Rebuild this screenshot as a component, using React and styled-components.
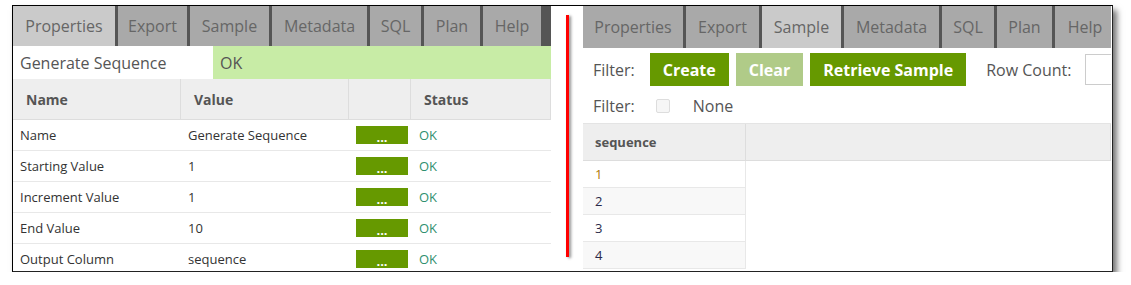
import React from 'react'
import styled, { createGlobalStyle } from 'styled-components'

const Global = createGlobalStyle`
  body {
    margin: 0;
    background: #fff;
    font-family: "Open Sans", "Liberation Sans", sans-serif;
  }
`

const Page = styled.div`
  padding: 5px 0 0 12px;
`

const Frame = styled.div`
  width: 1099px;
  height: 265px;
  display: flex;
  background: #fff;
  border-left: 1px solid #000;
  border-top: 1px solid #000;
  border-right: 1px solid #222;
  border-bottom: 1px solid #222;
  box-shadow: 4px 5px 6px rgba(0, 0, 0, 0.55);
  overflow: hidden;
`

const Panel = styled.div`
  width: ${p => p.w}px;
  display: flex;
  flex-direction: column;
  flex-shrink: 0;
  overflow: hidden;
  & > * { flex-shrink: 0; }
`

const Tabs = styled.div`
  display: flex;
  height: ${p => p.h}px;
  background: #555;
`

const Tab = styled.div`
  width: ${p => p.w}px;
  flex-shrink: 0;
  margin-right: 3px;
  display: flex;
  align-items: center;
  justify-content: center;
  font-size: 16px;
  color: #666;
  white-space: nowrap;
  background: ${p => (p.active ? '#cacaca' : '#a9a9a9')};
  &:last-child { margin-right: 0; }
`

const Gutter = styled.div`
  width: 32px;
  flex-shrink: 0;
  display: flex;
  justify-content: center;
  padding-top: 9px;
`

const RedLine = styled.div`
  width: 3px;
  height: 242px;
  background: #f00;
  box-shadow: 2px 1px 3px rgba(0, 0, 0, 0.45);
`

const StatusRow = styled.div`
  display: flex;
  height: 33px;
  font-size: 16px;
  color: #555;
`

const StatusName = styled.div`
  width: 200px;
  box-sizing: border-box;
  padding-left: 7px;
  display: flex;
  align-items: center;
`

const StatusOk = styled.div`
  flex: 1;
  background: #c8eca6;
  padding-left: 7px;
  display: flex;
  align-items: center;
`

const Grid = styled.div`
  display: grid;
  grid-template-columns: ${p => p.cols};
`

const Head = styled.div`
  height: ${p => p.h}px;
  box-sizing: border-box;
  background: #eee;
  border-right: 1px solid #ddd;
  border-bottom: 1px solid #ddd;
  display: flex;
  align-items: center;
  padding-left: ${p => p.pl || 13}px;
  font-size: ${p => p.fs || 14}px;
  font-weight: 700;
  color: #555;
  &:last-child { border-right: none; }
`

const Cell = styled.div`
  height: ${p => p.h}px;
  box-sizing: border-box;
  display: flex;
  align-items: center;
  padding-left: ${p => p.pl || 7}px;
  font-size: 13px;
  white-space: nowrap;
  color: ${p => p.color || '#333'};
  background: ${p => p.bg || '#fff'};
  border-bottom: ${p => (p.nb ? 'none' : '1px solid #e8e8e8')};
  border-right: ${p => (p.br ? '1px solid #e8e8e8' : 'none')};
`

const DotButton = styled.div`
  width: 52px;
  height: 18px;
  background: #669900;
  color: #fff;
  font-weight: 700;
  font-size: 13px;
  display: flex;
  align-items: flex-end;
  justify-content: center;
  line-height: 14px;
`

const Toolbar = styled.div`
  display: flex;
  align-items: center;
  gap: ${p => p.gap || 0}px;
  padding: ${p => p.pad};
  font-size: 16px;
  color: #555;
  white-space: nowrap;
  & > * { flex-shrink: 0; }
`

const Label = styled.span`
  margin-right: ${p => p.mr || 0}px;
  margin-left: ${p => p.ml || 0}px;
`

const Button = styled.div`
  height: 33px;
  padding: 0 13px;
  display: flex;
  align-items: center;
  background: ${p => (p.light ? '#b0cb88' : '#669900')};
  color: #fff;
  font-weight: 700;
  font-size: 16px;
`

const Input = styled.div`
  width: 40px;
  height: 29px;
  border: 1px solid #ccc;
  margin-left: 7px;
`

const Check = styled.div`
  width: 12px;
  height: 12px;
  border: 1px solid #ddd;
  border-radius: 2px;
  background: #f6f6f6;
  margin: 0 23px 0 0;
`

const Sample = styled.div`
  margin-top: 6px;
  display: grid;
  grid-template-columns: 163px 1fr;
  border-top: 1px solid #e4e4e4;
`

const leftRows = [
  ['Name', 'Generate Sequence'],
  ['Starting Value', '1'],
  ['Increment Value', '1'],
  ['End Value', '10'],
  ['Output Column', 'sequence'],
]

const leftTabs = [
  ['Properties', 102, true],
  ['Export', 69],
  ['Sample', 79],
  ['Metadata', 95],
  ['SQL', 51],
  ['Plan', 56],
  ['Help', 58],
]

const rightTabs = [
  ['Properties', 100],
  ['Export', 73],
  ['Sample', 79, true],
  ['Metadata', 95],
  ['SQL', 52],
  ['Plan', 55],
  ['Help', 60],
]

export default function App() {
  return (
    <Page>
      <Global />
      <Frame>
        <Panel w={538}>
          <Tabs h={40}>
            {leftTabs.map(([t, w, a]) => (
              <Tab key={t} w={w} active={a}>{t}</Tab>
            ))}
          </Tabs>
          <StatusRow>
            <StatusName>Generate Sequence</StatusName>
            <StatusOk>OK</StatusOk>
          </StatusRow>
          <Grid cols="168px 168px 62px 1fr">
            <Head h={41}>Name</Head>
            <Head h={41}>Value</Head>
            <Head h={41} />
            <Head h={41}>Status</Head>
            {leftRows.map(([n, v]) => (
              <React.Fragment key={n}>
                <Cell h={31}>{n}</Cell>
                <Cell h={31}>{v}</Cell>
                <Cell h={31}><DotButton>...</DotButton></Cell>
                <Cell h={31} pl={8} color="#2f8f6f">OK</Cell>
              </React.Fragment>
            ))}
          </Grid>
        </Panel>
        <Gutter>
          <RedLine />
        </Gutter>
        <Panel w={528}>
          <Tabs h={42}>
            {rightTabs.map(([t, w, a]) => (
              <Tab key={t} w={w} active={a}>{t}</Tab>
            ))}
          </Tabs>
          <Toolbar pad="5px 0 0 10px" gap={7}>
            <Label mr={8}>Filter:</Label>
            <Button>Create</Button>
            <Button light>Clear</Button>
            <Button>Retrieve Sample</Button>
            <Label ml={13}>Row Count:</Label>
            <Input />
          </Toolbar>
          <Toolbar pad="9px 0 0 10px">
            <Label mr={21}>Filter:</Label>
            <Check />
            <Label>None</Label>
          </Toolbar>
          <Sample>
            <Head h={37} pl={12} fs={13}>sequence</Head>
            <Head h={37} />
            {['1', '2', '3', '4'].map((n, i) => (
              <React.Fragment key={n}>
                <Cell h={27} pl={12} br bg={i % 2 ? '#f8f8f8' : '#fff'} color={i === 0 ? '#b07800' : '#2a2a4a'}>{n}</Cell>
                <Cell h={27} nb />
              </React.Fragment>
            ))}
          </Sample>
        </Panel>
      </Frame>
    </Page>
  )
}
